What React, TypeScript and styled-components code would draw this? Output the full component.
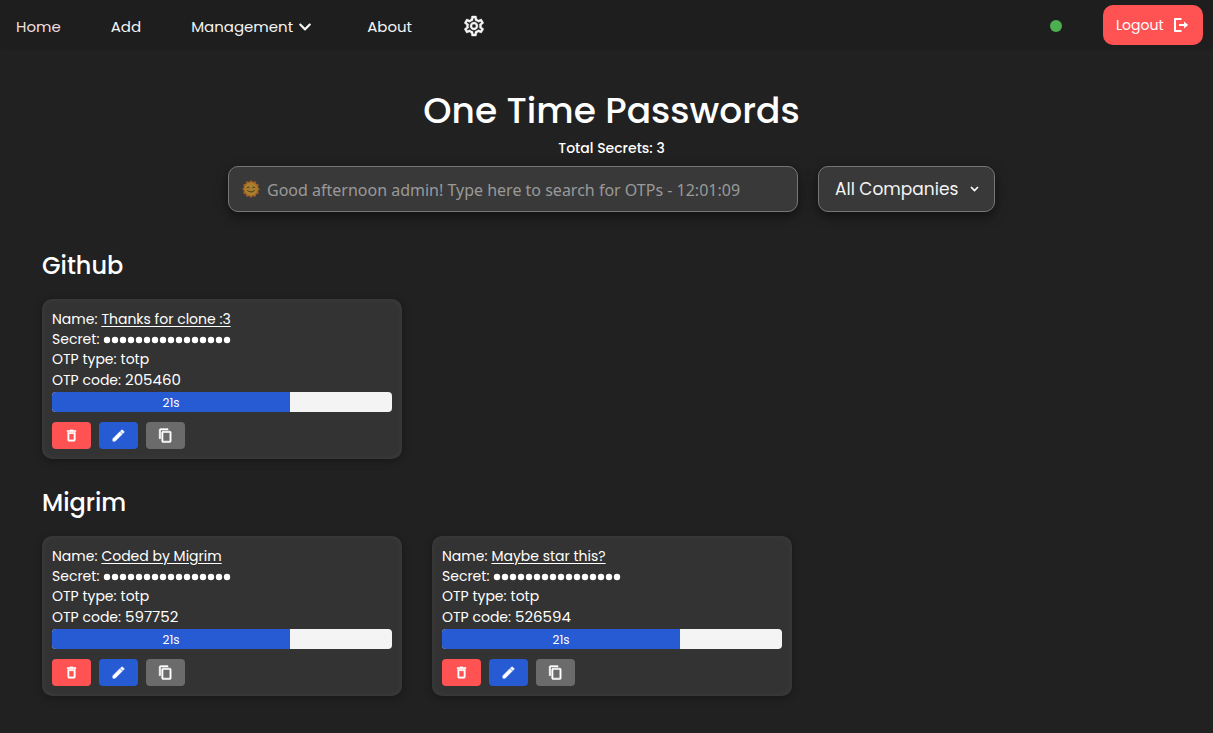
import React from "react";
import styled, { createGlobalStyle } from "styled-components";
import { MdContentCopy, MdDeleteOutline, MdEdit, MdOutlineSettings } from "react-icons/md";
import { FaChevronDown } from "react-icons/fa";

const GlobalStyle = createGlobalStyle`
  * { box-sizing: border-box; }
  body {
    margin: 0;
    background: #212121;
    color: #fff;
    font-family: Poppins, Inter, "Liberation Sans", sans-serif;
    font-size: 14px;
  }
  button, select { font-family: inherit; cursor: pointer; }
`;

const NavBar = styled.nav`
  display: flex;
  align-items: center;
  height: 50px;
  padding: 0 10px 0 16px;
  background: #1e1e1e;
  border-radius: 5px;
`;

const NavLinks = styled.div`
  display: flex;
  align-items: center;
  gap: 50px;
  flex: 1;
`;

const NavLink = styled.a<{ $active?: boolean }>`
  display: flex;
  align-items: center;
  padding-top: 4px;
  color: ${(p) => (p.$active ? "#f2dfdf" : "#f4f4f4")};
  font-size: 15px;
  line-height: 24px;
  text-decoration: none;
`;

const MenuChevron = styled(FaChevronDown)`
  margin: 0 5px;
`;

const StatusDot = styled.span`
  width: 12px;
  height: 12px;
  margin: 2px 41px 0 0;
  border-radius: 50%;
  background: #4caf50;
`;

const LogoutButton = styled.button`
  display: flex;
  align-items: center;
  gap: 9px;
  width: 100px;
  height: 40px;
  padding: 0 13px;
  border: 0;
  border-radius: 10px;
  background: #ff5252;
  color: #fff;
  font-size: 14px;
`;

const Main = styled.main`
  padding: 36px 0 36px 10px;
`;

const Title = styled.h1`
  margin: 0;
  font-size: 36px;
  font-weight: 500;
  line-height: 50px;
  text-align: center;
`;

const Total = styled.p`
  margin: 0;
  font-size: 14px;
  font-weight: 500;
  line-height: 24px;
  padding-bottom: 6px;
  text-align: center;
`;

const Filters = styled.div`
  display: flex;
  justify-content: center;
  gap: 20px;
`;

const Field = styled.div<{ $width: number }>`
  position: relative;
  width: ${(p) => p.$width}px;
  height: 46px;
`;

const controlStyle = `
  width: 100%;
  height: 100%;
  border: 1px solid #777;
  border-radius: 10px;
  background: #393939;
  box-shadow: 0 4px 12px rgba(0, 0, 0, 0.5);
`;

const SearchInput = styled.input`
  ${controlStyle}
  padding: 2px 14px 0 38px;
  color: #fff;
  font-family: "Segoe UI", "Noto Sans", sans-serif;
  font-size: 16px;
  &::placeholder { color: #999; opacity: 1; }
`;

const CompanySelect = styled.select`
  ${controlStyle}
  appearance: none;
  padding: 0 30px 0 16px;
  color: #f4f4f4;
  font-size: 17px;
`;

const FieldIcon = styled.span<{ $side: "left" | "right" }>`
  position: absolute;
  ${(p) => (p.$side === "left" ? "left: 14px;" : "right: 16px;")}
  top: 0;
  bottom: 0;
  display: flex;
  align-items: center;
  pointer-events: none;
`;

const Companies = styled.div`
  display: grid;
  gap: 26px;
  padding: 36px 32px 0;
`;

const CompanyName = styled.h2`
  margin: 0 0 15px;
  font-size: 24px;
  font-weight: 500;
  line-height: 36px;
`;

const Cards = styled.div`
  display: flex;
  flex-wrap: wrap;
  gap: 30px;
`;

const Card = styled.article`
  width: 360px;
  padding: 10px;
  border-radius: 10px;
  background: #333;
  box-shadow: 0 2px 8px rgba(0, 0, 0, 0.3), inset 0 0 6px rgba(255, 255, 255, 0.06);
`;

const Line = styled.div`
  display: flex;
  gap: 4px;
  font-size: 14px;
  line-height: 20px;
`;

const CodeLine = styled(Line)`
  line-height: 22px;
`;

const OtpLink = styled.a`
  color: #fff;
  text-underline-offset: 2px;
`;

const Mask = styled.span`
  display: flex;
  align-items: center;
`;

const Code = styled.span`
  font-size: 15px;
`;

const Track = styled.div`
  height: 20px;
  margin: 1px 0 10px;
  overflow: hidden;
  border-radius: 4px;
  background: #f4f4f4;
`;

const Fill = styled.div`
  height: 100%;
  background: #275bd4;
  font-size: 12px;
  line-height: 21px;
  text-align: center;
`;

const Actions = styled.div`
  display: flex;
  gap: 8px;
`;

const ActionButton = styled.button<{ $color: string }>`
  display: flex;
  align-items: center;
  justify-content: center;
  width: 39px;
  height: 27px;
  padding: 0;
  border: 0;
  border-radius: 4px;
  background: ${(p) => p.$color};
  color: #fff;
  path { stroke: currentColor; stroke-width: 1px; }
  path[fill="none"] { stroke: none; }
`;

const GearIcon = styled(MdOutlineSettings)`
  margin-bottom: 2px;
  path { stroke: currentColor; stroke-width: 0.4px; }
  path[fill="none"] { stroke: none; }
`;

const SunFace = () => (
  <svg width="18" height="18" viewBox="0 0 18 18" aria-hidden="true">
    <g fill="#a0602a">
      {Array.from({ length: 12 }, (_, i) => (
        <circle key={i} cx="9" cy="2" r="1.600" transform={`rotate(${i * 30} 9 9)`} />
      ))}
      <circle cx="9" cy="9" r="7.300" />
    </g>
    <circle cx="9" cy="9" r="6.500" fill="#a8802c" />
    <path d="M5 7.600q1.200-1.500 2.400 0M10.600 7.600q1.200-1.500 2.400 0M5.600 10.600q3.400 3 6.800 0" fill="none" stroke="#4a3527" strokeWidth="1" strokeLinecap="round" />
  </svg>
);

const LogoutIcon = () => (
  <svg width="16" height="16" viewBox="0 0 16 16" aria-hidden="true">
    <path d="M8.500 2H2v12h6.500" fill="none" stroke="currentColor" strokeWidth="2" strokeLinejoin="round" />
    <path d="M6 7h5V4.500l4.200 3.500-4.200 3.500V9H6z" fill="currentColor" />
  </svg>
);

const SelectArrow = () => (
  <svg width="9" height="6" viewBox="0 0 9 6" aria-hidden="true">
    <path d="M1 1l3.500 3.500L8 1" fill="none" stroke="#fff" strokeWidth="1.700" />
  </svg>
);

const MaskedSecret = ({ length }: { length: number }) => (
  <Mask role="img" aria-label="Hidden secret">
    <svg width={length * 8} height="10" viewBox={`0 0 ${length * 8} 10`}>
      {Array.from({ length }, (_, i) => (
        <circle key={i} cx={i * 8 + 4} cy="6" r="3.200" fill="#fff" />
      ))}
    </svg>
  </Mask>
);

const companies = [
  { name: "Github", secrets: [{ name: "Thanks for clone :3", code: "205460" }] },
  {
    name: "Migrim",
    secrets: [
      { name: "Coded by Migrim", code: "597752" },
      { name: "Maybe star this?", code: "526594" },
    ],
  },
];

const OtpCard = ({ name, code, seconds }: { name: string; code: string; seconds: number }) => (
  <Card>
    <Line>Name: <OtpLink href="#">{name}</OtpLink></Line>
    <Line>Secret: <MaskedSecret length={16} /></Line>
    <Line>OTP type: <span>totp</span></Line>
    <CodeLine>OTP code: <Code>{code}</Code></CodeLine>
    <Track role="progressbar" aria-label="Time left" aria-valuemin={0} aria-valuemax={30} aria-valuenow={seconds}>
      <Fill style={{ width: `${(seconds / 30) * 100}%` }}>{seconds}s</Fill>
    </Track>
    <Actions>
      <ActionButton $color="#ff5252" aria-label="Delete"><MdDeleteOutline size={15} /></ActionButton>
      <ActionButton $color="#275bd4" aria-label="Edit"><MdEdit size={15} /></ActionButton>
      <ActionButton $color="#6b6b6b" aria-label="Copy"><MdContentCopy size={15} /></ActionButton>
    </Actions>
  </Card>
);

export default function App() {
  return (
    <>
      <GlobalStyle />
      <NavBar>
        <NavLinks>
          <NavLink href="#" $active>Home</NavLink>
          <NavLink href="#">Add</NavLink>
          <NavLink href="#">Management <MenuChevron size={14} /></NavLink>
          <NavLink href="#">About</NavLink>
          <NavLink href="#" aria-label="Settings"><GearIcon size={24} /></NavLink>
        </NavLinks>
        <StatusDot />
        <LogoutButton>Logout <LogoutIcon /></LogoutButton>
      </NavBar>
      <Main>
        <Title>One Time Passwords</Title>
        <Total>Total Secrets: 3</Total>
        <Filters>
          <Field $width={570}>
            <SearchInput aria-label="Search OTPs" placeholder="Good afternoon admin! Type here to search for OTPs - 12:01:09" />
            <FieldIcon $side="left"><SunFace /></FieldIcon>
          </Field>
          <Field $width={177}>
            <CompanySelect aria-label="Company">
              <option>All Companies</option>
              <option>Github</option>
              <option>Migrim</option>
            </CompanySelect>
            <FieldIcon $side="right"><SelectArrow /></FieldIcon>
          </Field>
        </Filters>
        <Companies>
          {companies.map((company) => (
            <section key={company.name}>
              <CompanyName>{company.name}</CompanyName>
              <Cards>
                {company.secrets.map((s) => <OtpCard key={s.name} {...s} seconds={21} />)}
              </Cards>
            </section>
          ))}
        </Companies>
      </Main>
    </>
  );
}
